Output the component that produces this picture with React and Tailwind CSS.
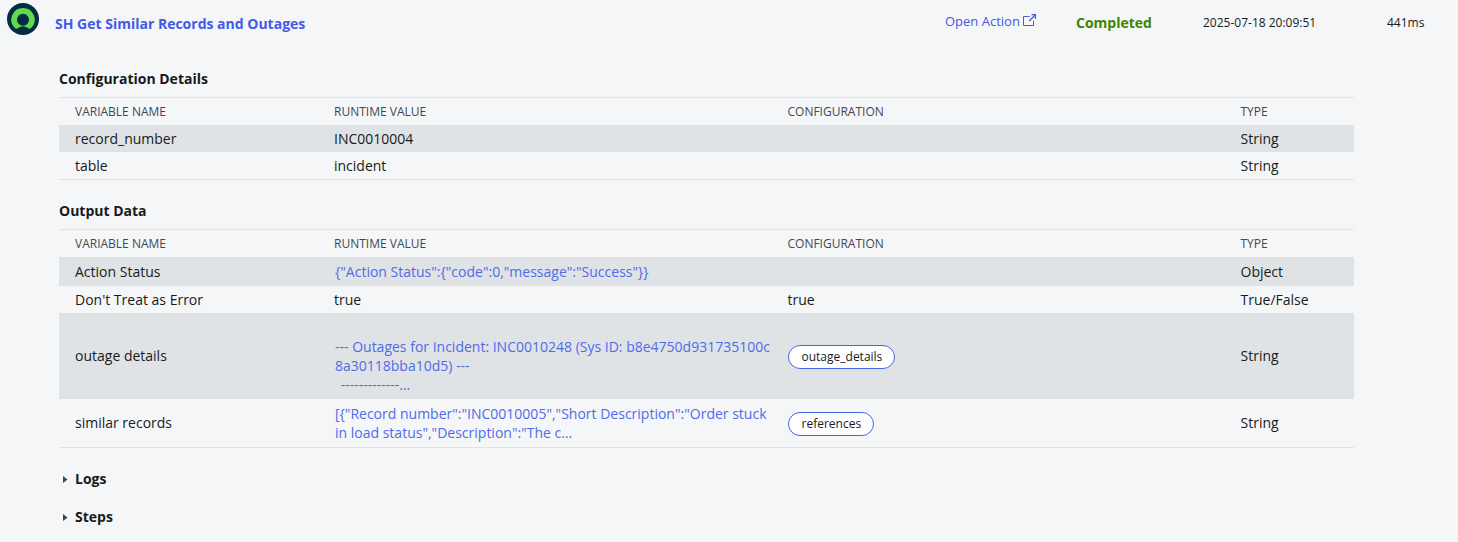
const GRID = 'grid grid-cols-[259px_453.5px_453px_1fr] items-center pl-4';

function Logo() {
  return (
    <svg className="size-8 shrink-0" viewBox="0 0 32 32">
      <circle cx="16" cy="16" r="16" fill="#032d42" />
      <path
        d="M16 4.9A11.8 11.8 0 0 0 7.8 25.1a2.2 2.2 0 0 0 2.9.2 8.9 8.9 0 0 1 10.6 0 2.2 2.2 0 0 0 2.9-.2A11.8 11.8 0 0 0 16 4.9Zm0 17.9a6 6 0 1 1 0-12 6 6 0 0 1 0 12Z"
        fill="#62d84e"
        fillRule="evenodd"
      />
    </svg>
  );
}

function OpenIcon() {
  return (
    <svg className="mt-[2px] -ml-px h-[14px] w-[14px]" viewBox="0 0 14 14" fill="none" stroke="#4359e8">
      <path d="M7.5 2.5h-6v9h10v-5" />
      <path d="M7.2 7 13.2 1M9.5 .7h4V5" strokeWidth="1.25" />
    </svg>
  );
}

function HeaderRow() {
  return (
    <div className={`${GRID} h-[27px] text-[12px] text-[#3f4952]`}>
      <span>VARIABLE NAME</span>
      <span>RUNTIME VALUE</span>
      <span>CONFIGURATION</span>
      <span>TYPE</span>
    </div>
  );
}

function Link({ children }) {
  return <div className="w-[440px] whitespace-pre pl-px leading-[19px] text-[#4f6bea]">{children}</div>;
}

function Pill({ children }) {
  return (
    <span className="mt-px inline-flex h-6 items-center rounded-full border border-[#4366e5] bg-white pr-3 pl-[13px] text-[12px] leading-4 text-[#161b1c]">
      {children}
    </span>
  );
}

function Row({ name, value, config, type, className, labelClass = '' }) {
  return (
    <div className={`${GRID} text-[14px] leading-[19px] ${className}`}>
      <span className={labelClass}>{name}</span>
      <div>{value}</div>
      <div>{config}</div>
      <span className={labelClass}>{type}</span>
    </div>
  );
}

function Toggle({ label }) {
  return (
    <div className="flex h-[38px] items-center pl-1 text-[14px] font-bold">
      <svg className="mt-[3px] mr-[7.5px] h-[7px] w-[4.5px]" viewBox="0 0 4.5 7">
        <path d="M0 0 4.5 3.5 0 7Z" fill="#3c4847" />
      </svg>
      {label}
    </div>
  );
}

export default function App() {
  return (
    <main className="h-[542px] w-[1458px] overflow-hidden bg-[#f5f6f8] font-['Open_Sans','Liberation_Sans',sans-serif] text-[#161b1c]">
      <header className="flex h-[60px] items-start pt-[3px] pl-[7px]">
        <Logo />
        <h1 className="mt-[11px] ml-4 w-[890px] text-[14px] leading-[19px] font-bold text-[#4359e8]">
          SH Get Similar Records and Outages
        </h1>
        <a className="mt-[9px] flex w-[131px] gap-[3px] text-[13px] leading-[18px] text-[#4359e8]">
          Open Action
          <OpenIcon />
        </a>
        <span className="mt-[10px] w-[127px] text-[14px] leading-[19px] font-bold text-[#3f8400]">Completed</span>
        <span className="mt-[12px] w-[184px] text-[12px] leading-4">2025-07-18 20:09:51</span>
        <span className="mt-[12px] text-[12px] leading-4">441ms</span>
      </header>
      <div className="ml-[59px] w-[1295px]">
        <h2 className="h-[37px] pt-[9px] text-[14px] leading-[19px] font-bold">Configuration Details</h2>
        <section className="border-y border-[#e0e3e6]">
          <HeaderRow />
          <Row className="h-[27px] bg-[#e0e3e5]" name="record_number" value="INC0010004" type="String" />
          <Row className="h-[27px]" name="table" value="incident" type="String" />
        </section>
        <h2 className="h-[49px] pt-[21px] text-[14px] leading-[19px] font-bold">Output Data</h2>
        <section className="border-y border-[#e0e3e6]">
          <HeaderRow />
          <Row
            className="h-[29px] bg-[#e0e3e5]"
            name="Action Status"
            value={<Link>{'{"Action Status":{"code":0,"message":"Success"}}'}</Link>}
            type="Object"
          />
          <Row className="h-[27px]" name="Don't Treat as Error" value="true" config="true" type="True/False" />
          <Row
            className="h-[86px] bg-[#e0e3e5]"
            labelClass="pb-0.5"
            name="outage details"
            value={
              <Link>
                {'\n--- Outages for Incident: INC0010248 (Sys ID: b8e4750d931735100c\n8a30118bba10d5) ---\n'}
                <span className="pl-0.5">{' -------------...'}</span>
              </Link>
            }
            config={<Pill>outage_details</Pill>}
            type="String"
          />
          <Row
            className="h-[48px]"
            labelClass="pb-0.5"
            name="similar records"
            value={
              <Link>
                {'[{"Record number":"INC0010005","Short Description":"Order stuck\nin load status","Description":"The c...'}
              </Link>
            }
            config={<Pill>references</Pill>}
            type="String"
          />
        </section>
        <div className="pt-[11px]">
          <Toggle label="Logs" />
          <Toggle label="Steps" />
        </div>
      </div>
    </main>
  );
}
